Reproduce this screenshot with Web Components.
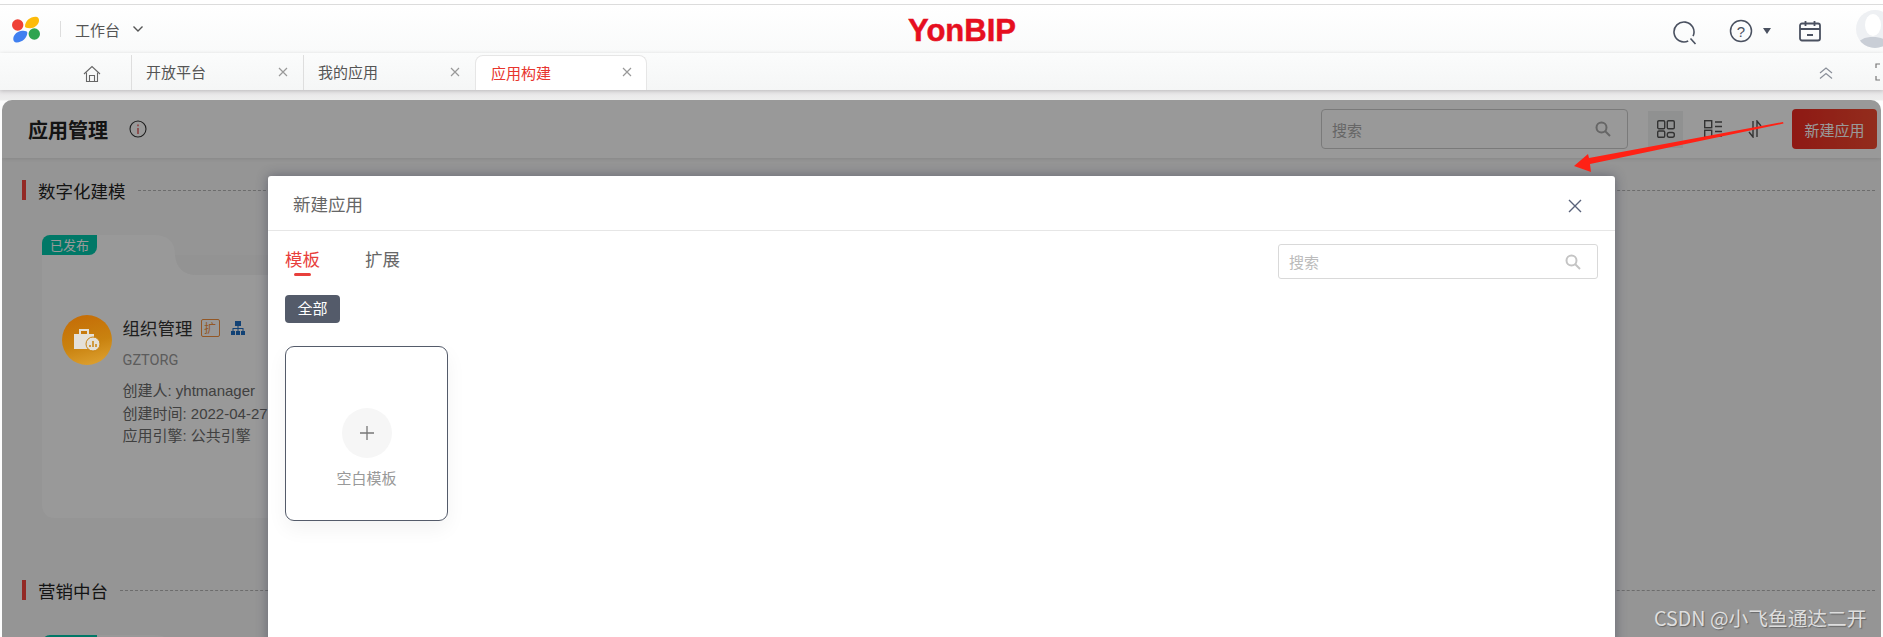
<!DOCTYPE html>
<html lang="zh">
<head>
<meta charset="utf-8">
<title>应用构建</title>
<style>
  html, body { margin: 0; height: 637px; overflow: hidden; }
  body {
    font-family: "Noto Sans CJK SC", "Liberation Sans", sans-serif;
    background: #fff;
    display: flex;
    flex-direction: column;
  }
</style>
</head>
<body>
  <yb-topbar></yb-topbar>
  <yb-tabs>
    <yb-tab>开放平台</yb-tab>
    <yb-tab>我的应用</yb-tab>
    <yb-tab active>应用构建</yb-tab>
  </yb-tabs>
  <app-page>
    <page-head></page-head>
    <section-title>数字化建模</section-title>
    <app-card name="组织管理" code="GZTORG" creator="yhtmanager" created="2022-04-27" engine="公共引擎"></app-card>
    <section-title class="second">营销中台</section-title>
    <app-card class="stub"></app-card>
    <new-app-dialog></new-app-dialog>
    <red-arrow></red-arrow>
    <water-mark>CSDN @小飞鱼通达二开</water-mark>
  </app-page>

<script>
// Top bar with logo, workbench switch, brand and user icons
class YbTopbar extends HTMLElement {
  constructor() {
    super();
    const shadow = this.attachShadow({ mode: 'open' });
    shadow.innerHTML = `
    <style>
      :host {
        display: flex;
        align-items: center;
        height: 48px;
        flex: none;
        border-top: 1px solid #dcdcdc;
        margin-top: 4px;
        background: linear-gradient(#fff, #f9fafa);
        position: relative;
        overflow: hidden;
      }
      .logo { margin-left: 12px; flex: none; }
      .sep { width: 1px; height: 16px; background: #ddd; margin: 0 14px 0 20px; }
      .work { font-size: 15px; color: #555; }
      .chev { margin-left: 12px; }
      .brand {
        position: absolute;
        left: 908px;
        top: 8px;
        font: bold 31px/36px "Liberation Sans", sans-serif;
        -webkit-text-stroke: .5px #e60f20;
        color: #e60f20;
      }
      .tools { margin-left: auto; padding-top: 4px; display: flex; align-items: center; }
      .tools svg { display: block; flex: none; }
      .avatar { width: 38px; height: 38px; border-radius: 50%; background: #eef0f3; margin: -4px -11px 0 34px; overflow: hidden; }
    </style>
    <svg class="logo" width="28" height="27" viewBox="0 0 28 27">
      <circle cx="5.700" cy="9" r="5.700" fill="#ef4136"/>
      <path d="M13 10.500C13 5 18 1 23.500 .8 26 .7 27.300 2.500 27 5c-.5 4-4.500 7.200-9 7.200-3 0-5-.5-5-1.700z" fill="#fdbb0a"/>
      <path d="M15.300 16.500C15.300 22 10.300 26.200 4.800 26.400 2.300 26.500 1 24.700 1.300 22.200c.5-4 4.500-7.200 9-7.500 3-.2 5 .6 5 1.800z" fill="#4080f0"/>
      <circle cx="22.300" cy="18" r="5.700" fill="#2ea44f"/>
    </svg>
    <span class="sep"></span>
    <span class="work">工作台</span>
    <svg class="chev" width="12" height="8" viewBox="0 0 12 8"><path d="M1.500 1.500 6 6l4.500-4.500" fill="none" stroke="#555" stroke-width="1.400"/></svg>
    <span class="brand">YonBIP</span>
    <div class="tools">
      <svg width="24" height="24" viewBox="0 0 24 24" style="margin:3px 32px 0 0"><path d="M15.200 20.060A10 10 0 1 1 20.060 15.200" fill="none" stroke="#4a5160" stroke-width="1.600"/><path d="M17.500 17.500l5 5.500" stroke="#4a5160" stroke-width="1.600"/></svg>
      <svg width="24" height="24" viewBox="0 0 24 24"><circle cx="12" cy="12" r="10.500" fill="none" stroke="#4a5160" stroke-width="1.500"/><text x="12" y="17.500" font-size="15" font-family="Liberation Sans" text-anchor="middle" fill="#4a5160">?</text></svg>
      <svg width="8" height="6" viewBox="0 0 8 6" style="margin:0 27.500px 0 9.500px"><path d="M0 0h8L4 6z" fill="#4a5160"/></svg>
      <svg width="24" height="24" viewBox="0 0 24 24"><rect x="2" y="4.500" width="20" height="17" rx="2" fill="none" stroke="#4a5160" stroke-width="1.800"/><path d="M2 10h20M7.500 2v5M16.500 2v5M9 16h6" stroke="#4a5160" stroke-width="1.800"/></svg>
      <div class="avatar"><svg width="38" height="38" viewBox="0 0 38 38"><ellipse cx="17" cy="15" rx="8" ry="11" fill="#fff"/><path d="M0 38c2-9 9-11 17-11s15 2 17 11z" fill="#c9ced6"/></svg></div>
    </div>
    `;
  }
}
customElements.define('yb-topbar', YbTopbar);

// Tab strip, the tabs themselves come in through the slot
class YbTabs extends HTMLElement {
  constructor() {
    super();
    const shadow = this.attachShadow({ mode: 'open' });
    shadow.innerHTML = `
    <style>
      :host {
        display: flex;
        height: 37px;
        flex: none;
        background: linear-gradient(#fbfcfc, #f5f6f6);
        box-shadow: 0 1px 4px rgba(0,0,0,.18);
        position: relative;
        z-index: 1;
        overflow: hidden;
      }
      .home { width: 131px; padding: 4px 30px 0 0; display: flex; justify-content: flex-end; align-items: center; box-sizing: border-box; }
      .tabs { display: flex; align-items: flex-end; height: 100%; }
      .right { margin-left: auto; display: flex; align-items: center; padding-top: 3px; }
    </style>
    <div class="home">
      <svg width="18" height="18" viewBox="0 0 18 18" fill="none" stroke="#666" stroke-width="1.100"><path d="M1 9 9 1.500 17 9"/><path d="M3.500 7.500V16.500h11V7.500"/><path d="M6.500 16.500v-6h5v6"/></svg>
    </div>
    <div class="tabs"><slot></slot></div>
    <div class="right">
      <svg width="16" height="14" viewBox="0 0 16 14" fill="none" stroke="#8a8f99" stroke-width="1.200"><path d="M2 7l6-5 6 5M2 12.500l6-5 6 5"/></svg>
      <svg width="16" height="18" viewBox="0 0 16 18" fill="none" stroke="#777" stroke-width="1.200" style="margin:-3px -8px 0 41px"><path d="M5 1H1v4M1 13v4h4M11 1h4v4"/></svg>
    </div>
    `;
  }
}
customElements.define('yb-tabs', YbTabs);

class YbTab extends HTMLElement {
  constructor() {
    super();
    const shadow = this.attachShadow({ mode: 'open' });
    shadow.innerHTML = `
    <style>
      :host {
        display: flex;
        align-items: center;
        justify-content: space-between;
        box-sizing: border-box;
        width: 172px;
        height: 35px;
        padding: 0 15px 2px 14px;
        border-left: 1px solid #dedede;
        font-size: 15px;
        color: #555;
      }
      :host([active]) {
        background: #fff;
        color: #e8352e;
        border: 1px solid #e6e6e6;
        border-bottom: 0;
        border-radius: 8px 8px 0 0;
        padding-left: 15px;
        padding-right: 14px;
      }
      svg { flex: none; }
    </style>
    <slot></slot>
    <svg width="10" height="10" viewBox="0 0 10 10"><path d="M1 1l8 8M9 1l-8 8" stroke="#999" stroke-width="1.200"/></svg>
    `;
  }
}
customElements.define('yb-tab', YbTab);

// Content area, its ::after is the grey mask behind the dialog
class AppPage extends HTMLElement {
  constructor() {
    super();
    const shadow = this.attachShadow({ mode: 'open' });
    shadow.innerHTML = `
    <style>
      :host {
        display: block;
        flex: 1;
        position: relative;
        min-height: 0;
        overflow: hidden;
        padding-top: 10px;
        background: linear-gradient(#e6e4e6, #eeeeee 10px, #fdfdfd 11px);
      }
      .panel {
        margin: 0 2px;
        height: 600px;
        background: #f9f9f9;
        border-radius: 10px 10px 0 0;
        position: relative;
        overflow: hidden;
      }
      .panel::after {
        content: "";
        position: absolute;
        inset: 0;
        background: rgba(0,0,0,.4);
        z-index: 5;
      }
    </style>
    <div class="panel"><slot></slot></div>
    `;
  }
}
customElements.define('app-page', AppPage);

class PageHead extends HTMLElement {
  constructor() {
    super();
    const shadow = this.attachShadow({ mode: 'open' });
    shadow.innerHTML = `
    <style>
      :host {
        display: flex;
        align-items: center;
        height: 58px;
        padding: 0 4px 0 26px;
        background: #fff;
        box-shadow: 0 1px 4px rgba(0,0,0,.1);
      }
      h1 { margin: 0; font-size: 20px; font-weight: 700; color: #222; }
      .info { margin-left: 21px; }
      .search {
        margin-left: auto;
        box-sizing: border-box;
        width: 307px;
        height: 40px;
        border: 1px solid #ccc;
        border-radius: 4px;
        display: flex;
        align-items: center;
        justify-content: space-between;
        padding: 0 16px 0 10px;
        font-size: 15px;
        color: #aaa;
      }
      .view { height: 37px; display: flex; align-items: center; justify-content: center; }
      .view.on { width: 35px; background: #f1f2f2; margin-left: 20px; }
      .view.list { width: 36px; margin-left: 12px; }
      .view.sort { width: 20px; margin-left: 14px; }
      button {
        width: 85px; height: 40px;
        margin-left: 27px;
        padding: 0;
        border: 0;
        border-radius: 4px;
        background: linear-gradient(90deg, #ee2a22, #f44b30);
        color: #fff;
        font: 15px "Noto Sans CJK SC", sans-serif;
      }
    </style>
    <h1>应用管理</h1>
    <svg class="info" width="18" height="18" viewBox="0 0 18 18"><circle cx="9" cy="9" r="8" fill="none" stroke="#333" stroke-width="1.100"/><path d="M9 8v6M9 4.500v1.800" stroke="#e0393a" stroke-width="1.200"/></svg>
    <div class="search">搜索
      <svg width="16" height="16" viewBox="0 0 16 16" fill="none" stroke="#aaa" stroke-width="2"><circle cx="6.500" cy="6.500" r="5"/><path d="M10 10l5 5"/></svg>
    </div>
    <div class="view on"><svg width="18" height="18" viewBox="0 0 18 18" fill="none" stroke="#555" stroke-width="1.400"><rect x=".7" y=".7" width="7" height="8" rx="1.200"/><rect x="10.300" y=".7" width="7" height="8" rx="1.200"/><rect x=".7" y="11" width="7" height="6.300" rx="1.200"/><rect x="10.300" y="12.500" width="7" height="4.800" rx="2"/></svg></div>
    <div class="view list"><svg width="18" height="18" viewBox="0 0 18 18" fill="none" stroke="#555" stroke-width="1.400"><rect x=".7" y=".7" width="7" height="7"/><rect x=".7" y="10.300" width="7" height="7"/><path d="M11 2h7M11 6.500h7M11 11.500h7M11 16h7"/></svg></div>
    <div class="view sort"><svg width="14" height="18" viewBox="0 0 14 18" fill="none" stroke="#555" stroke-width="1.400"><path d="M5 1v16L1 12M9 17V1l4 5"/></svg></div>
    <button>新建应用</button>
    `;
  }
}
customElements.define('page-head', PageHead);

class SectionTitle extends HTMLElement {
  constructor() {
    super();
    const shadow = this.attachShadow({ mode: 'open' });
    shadow.innerHTML = `
    <style>
      :host {
        display: flex;
        align-items: center;
        height: 20px;
        margin: 22px 6px 0 20px;
        font-size: 17.500px;
        color: #222;
      }
      :host(.second) { margin-top: 62px; }
      :host::before { content: ""; width: 4px; height: 20px; background: #f5453f; margin-right: 12px; }
      .line { flex: 1; margin-left: 12px; border-top: 1px dashed #b5b5b5; }
    </style>
    <slot></slot><span class="line"></span>
    `;
  }
}
customElements.define('section-title', SectionTitle);

// Folder shaped application card
class AppCard extends HTMLElement {
  constructor() {
    super();
    const shadow = this.attachShadow({ mode: 'open' });
    const a = (k) => this.getAttribute(k) || '';
    shadow.innerHTML = `
    <style>
      :host {
        display: block;
        position: relative;
        width: 330px;
        height: 283px;
        margin: 35px 0 0 40px;
      }
      .folder { position: absolute; inset: 0; }
      .badge {
        position: absolute;
        left: 0; top: 0;
        width: 55px; height: 20px;
        background: #00c8ac;
        border-radius: 8px 0 8px 0;
        color: #fff;
        font-size: 13px;
        line-height: 20px;
        text-align: center;
      }
      .body {
        position: absolute;
        left: 20px; top: 80px;
        display: flex;
        gap: 10.500px;
      }
      .icon {
        width: 50px; height: 50px;
        border-radius: 50%;
        flex: none;
        background: linear-gradient(165deg, #c46a06, #c9820f 55%, #e0a535);
        display: flex;
        align-items: center;
        justify-content: center;
        position: relative;
        z-index: 6;
      }
      .name { font-size: 17.500px; line-height: 26px; color: #333; display: flex; align-items: center; }
      .ext { width: 19px; height: 18px; margin-left: 8px; box-sizing: border-box; border: 1px solid #f5923e; border-radius: 2px; font-size: 12px; line-height: 16px; text-align: center; color: #f5923e; }
      .org { margin-left: 10px; }
      .code { font: 14.500px/20px Roboto, sans-serif; color: #999; margin-top: 10px; }
      .meta { font: 15px/22.500px "Liberation Sans", "Noto Sans CJK SC", sans-serif; color: #6b6b6b; margin-top: 9px; white-space: nowrap; }
    </style>
    <svg class="folder" width="330" height="283" viewBox="0 0 330 283">
      <path d="M0 14Q0 0 14 0H111Q133 0 133 20Q135 40 155 40H330V283H14Q0 283 0 269Z" fill="#ffffff"/>
      <path d="M133 20H330V40H155Q135 40 133 20Z" fill="#f6f6f6"/>
    </svg>
    <div class="badge">${this.classList.contains('stub') ? '' : '已发布'}</div>
    ${a('name') ? `<div class="body">
      <div class="icon"><svg width="28" height="26" viewBox="0 0 28 26"><path d="M1 7h20v15H1z" fill="#e4e0d8"/><path d="M7 7V3h8v4" fill="none" stroke="#e4e0d8" stroke-width="2"/><circle cx="20" cy="17" r="7" fill="#e4e0d8" stroke="#c9820f"/><path d="M17 20v-2M20 20v-6M23 20v-3" stroke="#c9820f" stroke-width="1.500"/></svg></div>
      <div>
        <div class="name">${a('name')}<span class="ext">扩</span>
          <svg class="org" width="16" height="16" viewBox="0 0 16 16" fill="#1f6fc4"><rect x="5" y="1" width="6" height="5"/><path d="M7.500 6h1v2h5v3h-1V9H8.500v2h-1V9H3.500v2h-1V8h5z"/><rect x="1" y="11" width="4" height="4"/><rect x="6" y="11" width="4" height="4"/><rect x="11" y="11" width="4" height="4"/></svg>
        </div>
        <div class="code">${a('code')}</div>
        <div class="meta">创建人: ${a('creator')}<br>创建时间: ${a('created')}<br>应用引擎: ${a('engine')}</div>
      </div>
    </div>` : ''}
    `;
  }
}
customElements.define('app-card', AppCard);

// Modal: lies over the mask, so it is placed absolute
class NewAppDialog extends HTMLElement {
  constructor() {
    super();
    const shadow = this.attachShadow({ mode: 'open' });
    shadow.innerHTML = `
    <style>
      :host {
        display: block;
        position: absolute;
        left: 266px;
        top: 76px;
        width: 1347px;
        height: 600px;
        background: #fff;
        border-radius: 3px 3px 0 0;
        box-shadow: 0 0 12px rgba(40,45,70,.45);
        z-index: 10;
        color: #666;
      }
      header {
        display: flex;
        align-items: center;
        justify-content: space-between;
        box-sizing: border-box;
        height: 55px;
        padding: 0 32px 0 25px;
        border-bottom: 1px solid #e6e6e6;
        font-size: 17.500px;
      }
      header svg { margin-top: 6px; margin-right: 1px; }
      .tabs { display: flex; align-items: flex-start; justify-content: space-between; padding: 13px 17px 0 17px; height: 64px; box-sizing: border-box; }
      .tabs nav { display: flex; gap: 45px; font-size: 17.500px; line-height: 26px; padding-top: 2px; }
      .cur { color: #e8403c; position: relative; }
      .cur::after { content: ""; position: absolute; left: 9px; right: 9px; bottom: -4px; height: 3px; border-radius: 2px; background: #e8403c; }
      .search {
        box-sizing: border-box;
        width: 320px; height: 35px;
        border: 1px solid #d9d9d9;
        border-radius: 3px;
        display: flex;
        align-items: center;
        justify-content: space-between;
        padding: 0 16px 0 10px;
        font-size: 15px;
        color: #bbb;
      }
      .all {
        display: block;
        width: 55px; height: 28px;
        margin-left: 17px;
        border-radius: 4px;
        background: #545b6a;
        color: #fff;
        font-size: 15px;
        line-height: 26px;
        text-align: center;
      }
      .tpl {
        box-sizing: border-box;
        width: 163px; height: 175px;
        margin: 23px 0 0 17px;
        border: 1px solid #545b6a;
        border-radius: 9px;
        box-shadow: 0 8px 20px rgba(0,0,0,.05);
        display: flex;
        flex-direction: column;
        align-items: center;
        padding-top: 61px;
        font-size: 15px;
        line-height: 20px;
        color: #999;
      }
      .plus { width: 50px; height: 50px; border-radius: 50%; background: #f6f6f6; display: flex; align-items: center; justify-content: center; margin-bottom: 10px; }
    </style>
    <header>新建应用
      <svg width="14" height="14" viewBox="0 0 14 14"><path d="M1 1l12 12M13 1L1 13" stroke="#59627a" stroke-width="1.400"/></svg>
    </header>
    <div class="tabs">
      <nav><span class="cur">模板</span><span>扩展</span></nav>
      <div class="search">搜索
        <svg width="16" height="16" viewBox="0 0 16 16" fill="none" stroke="#c4c4c4" stroke-width="2"><circle cx="6.500" cy="6.500" r="5"/><path d="M10 10l5 5"/></svg>
      </div>
    </div>
    <span class="all">全部</span>
    <div class="tpl">
      <div class="plus"><svg width="14" height="14" viewBox="0 0 14 14"><path d="M7 0v14M0 7h14" stroke="#777" stroke-width="1.300"/></svg></div>
      空白模板
    </div>
    `;
  }
}
customElements.define('new-app-dialog', NewAppDialog);

// Hand drawn annotation from the screenshot
class RedArrow extends HTMLElement {
  constructor() {
    super();
    const shadow = this.attachShadow({ mode: 'open' });
    shadow.innerHTML = `
    <style>
      :host { position: absolute; left: 1568px; top: 20px; z-index: 11; display: block; width: 220px; height: 60px; }
    </style>
    <svg width="220" height="60" viewBox="0 0 220 60"><path d="M213 2L213.500 3.500L20 44L21 52L4 46L18 34L19 38Z" fill="#ff2115"/></svg>
    `;
  }
}
customElements.define('red-arrow', RedArrow);

class WaterMark extends HTMLElement {
  constructor() {
    super();
    const shadow = this.attachShadow({ mode: 'open' });
    shadow.innerHTML = `
    <style>
      :host {
        position: absolute;
        left: 1652px;
        top: 504px;
        z-index: 11;
        font-size: 19.700px;
        line-height: 28px;
        white-space: nowrap;
        color: #dedede;
        text-shadow: 1px 1px 1px #666;
      }
    </style>
    <slot></slot>
    `;
  }
}
customElements.define('water-mark', WaterMark);
</script>
</body>
</html>
